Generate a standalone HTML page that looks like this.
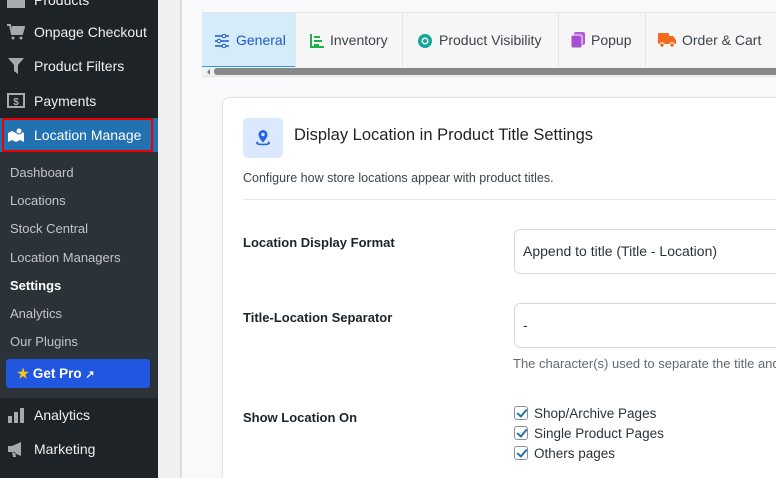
<!DOCTYPE html>
<html style="height:478px;overflow:hidden"><head><style>
*{box-sizing:border-box;margin:0;padding:0}
body{width:776px;height:478px;overflow:hidden;font-family:"Liberation Sans",sans-serif;background:#f0f0f1;position:relative}
#sb{position:absolute;left:0;top:0;width:158px;height:478px;background:#1d2327}
.mi{position:absolute;left:0;width:158px;height:34px;color:#f0f0f1;font-size:14px;line-height:34px;padding-left:34px}
.ic{position:absolute;left:7px;top:9px;width:18px;height:16px}
#sub{position:absolute;left:0;top:152px;width:158px;height:246px;background:#2c3338}
.si{position:absolute;left:10px;font-size:13px;color:#c3c4c7}
#main{position:absolute;left:180px;top:0;width:596px;height:478px;background:#f8f9fb;border-left:2px solid #dcdcde}
#tabs{position:absolute;left:202px;top:12px;width:574px;height:56px;background:#f6f6f7;border-top:1px solid #e2e4e7}
.tab{position:absolute;top:0;height:55px;line-height:55px;font-size:14px;color:#3c434a;border-right:1px solid #e4e5e7}
.tab svg{vertical-align:-3px;margin-right:6px}
#scroll{position:absolute;left:202px;top:67px;width:574px;height:10px;background:#f1f1f1;border-bottom:1px solid #e2e2e2}
#card{position:absolute;left:222px;top:97px;width:580px;height:381px;background:#fff;border:1px solid #e1e3e6;border-bottom:none;border-radius:8px 8px 0 0;box-shadow:0 1px 3px rgba(0,0,0,.06)}
.lbl{position:absolute;left:243px;font-size:13px;font-weight:bold;color:#1d2327}
.inp{position:absolute;left:514px;width:280px;height:45px;border:1px solid #d6d8dc;border-radius:6px;font-size:14px;color:#2c3338;padding-left:8px;line-height:43px;background:#fff}
.cb{position:absolute;left:514px;font-size:13.5px;color:#2c3338}
.cb i{display:inline-block;width:14px;height:14px;border:1px solid #8c8f94;border-radius:3px;vertical-align:-2px;margin-right:6px;position:relative}
.cb i:after{content:"";position:absolute;left:4px;top:0px;width:4px;height:8px;border:solid #2271b1;border-width:0 2px 2px 0;transform:rotate(40deg)}
</style></head><body>
<div id="sb">
<div class="mi" style="top:-17px">Products<span class="ic" style="background:#a7aaad;height:10px;top:15px"></span></div>
<div class="mi" style="top:15px"><svg class="ic" viewBox="0 0 18 16"><path d="M0 1h3l2 9h10l2-7H5" fill="none" stroke="#a7aaad" stroke-width="2"/><rect x="5" y="4" width="11" height="5" fill="#a7aaad"/><circle cx="6" cy="14" r="1.5" fill="#a7aaad"/><circle cx="14" cy="14" r="1.5" fill="#a7aaad"/></svg>Onpage Checkout</div>
<div class="mi" style="top:49px"><svg class="ic" viewBox="0 0 18 16"><path d="M1 0h16l-6 7v9l-4-3V7z" fill="#a7aaad"/></svg>Product Filters</div>
<div class="mi" style="top:84px"><svg class="ic" viewBox="0 0 18 16"><rect x="1" y="1" width="16" height="13" fill="none" stroke="#a7aaad" stroke-width="2"/><text x="9" y="12" font-size="10" font-weight="bold" fill="#a7aaad" text-anchor="middle" font-family="Liberation Sans">$</text></svg>Payments</div>
<div class="mi" style="top:118px;background:#2271b1;color:#fff"><svg class="ic" viewBox="0 0 18 16"><path d="M1 6l4-2 4 2 4-2 4 2v9l-4-2-4 2-4-2-4 2z" fill="#fff"/><circle cx="12" cy="4" r="3" fill="#fff" stroke="#2271b1"/></svg>Location Manage</div>
<div style="position:absolute;left:2px;top:118px;width:151px;height:34px;border:2px solid #e00"></div>
<div style="position:absolute;left:153px;top:128px;width:0;height:0;border:7px solid transparent;border-right-color:#f0f0f1"></div>
<div id="sub">
<div class="si" style="top:13px">Dashboard</div>
<div class="si" style="top:41px">Locations</div>
<div class="si" style="top:69px">Stock Central</div>
<div class="si" style="top:98px">Location Managers</div>
<div class="si" style="top:126px;color:#fff;font-weight:bold">Settings</div>
<div class="si" style="top:154px">Analytics</div>
<div class="si" style="top:182px">Our Plugins</div>
<div style="position:absolute;left:6px;top:207px;width:144px;height:29px;background:#2157e0;border-radius:3px;color:#fff;font-size:13.5px;font-weight:bold;line-height:29px;padding-left:11px"><span style="color:#f5c518">★</span> Get Pro <span style="font-size:11px">↗</span></div>
</div>
<div class="mi" style="top:398px"><svg class="ic" viewBox="0 0 18 16"><rect x="1" y="9" width="4" height="7" fill="#a7aaad"/><rect x="7" y="5" width="4" height="11" fill="#a7aaad"/><rect x="13" y="1" width="4" height="15" fill="#a7aaad"/></svg>Analytics</div>
<div class="mi" style="top:432px"><svg class="ic" viewBox="0 0 18 16"><path d="M1 5h4l9-4v14l-9-4H1z M5 11l1 5h3l-1-5" fill="#a7aaad"/></svg>Marketing</div>
</div>
<div id="main"></div>
<div id="tabs">
<div class="tab" style="left:0;width:94px;background:#d5ecfb;color:#2158c6;border-bottom:2px solid #2a9ee0;padding-left:12px"><svg width="16" height="14" viewBox="0 0 16 14"><path d="M1 2h14M1 7h14M1 12h14" stroke="#2158c6" stroke-width="1.5"/><circle cx="10" cy="2" r="1.8" fill="#d5ecfb" stroke="#2158c6"/><circle cx="5" cy="7" r="1.8" fill="#d5ecfb" stroke="#2158c6"/><circle cx="10" cy="12" r="1.8" fill="#d5ecfb" stroke="#2158c6"/></svg>General</div>
<div class="tab" style="left:94px;width:107px;padding-left:14px"><svg width="14" height="14" viewBox="0 0 14 14"><path d="M1 0v13h13M4 3h6M4 7h8M4 11h5" stroke="#22b04b" stroke-width="2" fill="none"/></svg>Inventory</div>
<div class="tab" style="left:201px;width:156px;padding-left:14px"><svg width="16" height="14" viewBox="0 0 16 14"><circle cx="8" cy="7" r="7" fill="#14a89a"/><circle cx="8" cy="7" r="3.5" fill="#fff"/><circle cx="8" cy="7" r="2" fill="#14a89a"/></svg>Product Visibility</div>
<div class="tab" style="left:357px;width:87px;padding-left:12px"><svg width="14" height="16" viewBox="0 0 14 16"><rect x="3" y="0" width="11" height="13" rx="2" fill="#b45bd9"/><rect x="0" y="3" width="11" height="13" rx="2" fill="#a64fd0" stroke="#f6f6f7"/></svg>Popup</div>
<div class="tab" style="left:444px;width:140px;padding-left:12px;border:none"><svg width="18" height="16" viewBox="0 0 18 16"><rect x="0" y="1" width="11" height="11" rx="1" fill="#f26b1d"/><path d="M11 4h4l3 4v4h-7z" fill="#f26b1d"/><circle cx="4" cy="13" r="2.3" fill="#f26b1d" stroke="#fff"/><circle cx="14" cy="13" r="2.3" fill="#f26b1d" stroke="#fff"/></svg>Order &amp; Cart</div>
</div>
<div id="scroll"><div style="position:absolute;left:2px;top:2px;width:0;height:0;border:3px solid transparent;border-right-color:#7d7d7d"></div><div style="position:absolute;left:12px;top:1px;width:580px;height:7px;background:#888;border-radius:3px"></div></div>
<div id="card"></div>
<div style="position:absolute;left:243px;top:118px;width:40px;height:40px;background:#dbe8fe;border-radius:5px"><svg width="40" height="40" viewBox="0 0 40 40"><path d="M20 12a4.5 4.5 0 0 0-4.5 4.5c0 3.5 4.5 8 4.5 8s4.5-4.5 4.5-8A4.5 4.5 0 0 0 20 12z" fill="#2563eb"/><circle cx="20" cy="16.5" r="1.7" fill="#dbe8fe"/><path d="M15 24c-2 .8-2 2.5 5 2.5s7-1.7 5-2.5" fill="none" stroke="#2563eb" stroke-width="1.6"/></svg></div>
<div style="position:absolute;left:294px;top:126px;font-size:16.5px;color:#1d2327">Display Location in Product Title Settings</div>
<div style="position:absolute;left:243px;top:171px;font-size:12.5px;color:#3c434a">Configure how store locations appear with product titles.</div>
<div style="position:absolute;left:243px;top:199px;width:540px;height:1px;background:#e5e7ea"></div>
<div class="lbl" style="top:235px">Location Display Format</div>
<div class="inp" style="top:229px">Append to title (Title - Location)</div>
<div class="lbl" style="top:310px">Title-Location Separator</div>
<div class="inp" style="top:303px">-</div>
<div style="position:absolute;left:513px;top:356px;font-size:13px;color:#646970;white-space:nowrap">The character(s) used to separate the title and</div>
<div class="lbl" style="top:410px">Show Location On</div>
<div class="cb" style="top:406px"><i></i>Shop/Archive Pages</div>
<div class="cb" style="top:426px"><i></i>Single Product Pages</div>
<div class="cb" style="top:446px"><i></i>Others pages</div>
</body></html>
